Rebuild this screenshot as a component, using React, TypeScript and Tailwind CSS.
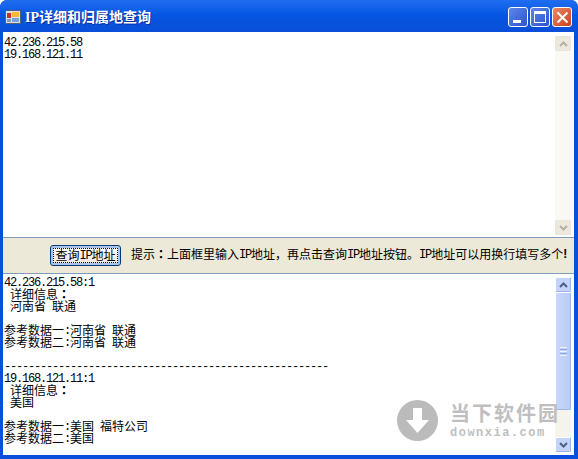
import React from "react";

function Txt({ text }: { text: string }) {
	const parts = text.match(/[\x00-\x7f]+|：|[^\x00-\x7f：]+/g) ?? [];
	return (
		<>
			{parts.map((p, i) => {
				if (p === "：") {
					return (
						<span key={i} className="inline-block align-top h-[12px] leading-[12px] font-bold font-['Noto_Sans_CJK_TC',sans-serif]">
							{p}
						</span>
					);
				}
				if (/^[\x00-\x7f]/.test(p)) {
					return (
						<span key={i} className="inline-block align-top h-[12px] leading-[14px] font-['Liberation_Mono',monospace] tracking-[-1.2px]">
							{p}
						</span>
					);
				}
				return (
					<span key={i} className="inline-block align-top h-[12px] leading-[12px]">
						{p}
					</span>
				);
			})}
		</>
	);
}

function Lines({ lines, top }: { lines: string[]; top: string }) {
	return (
		<div className={`flex-1 min-w-0 pl-[1px] overflow-hidden text-[12px] leading-[12px] text-black font-['Noto_Sans_CJK_SC',sans-serif] ${top}`}>
			{lines.map((l, i) => (
				<div key={i} className="h-[12px] whitespace-pre">
					<Txt text={l} />
				</div>
			))}
		</div>
	);
}

function Chevron({ up, color }: { up?: boolean; color: string }) {
	return (
		<svg width="9" height="6" viewBox="0 0 9 6" fill="none">
			<path d={up ? "M1 5L4.5 1.5L8 5" : "M1 1L4.5 4.5L8 1"} stroke={color} strokeWidth="2" />
		</svg>
	);
}

function DisabledBar() {
	return (
		<div className="w-[16px] mt-[4px] mb-[2px] mr-[3px] flex flex-col bg-[#f9f8f3]">
			<div className="h-[15px] rounded-[2px] border border-[#e8e6da] bg-[#ece9dc] flex items-center justify-center">
				<Chevron up color="#b5b2a2" />
			</div>
			<div className="flex-1" />
			<div className="h-[15px] rounded-[2px] border border-[#e8e6da] bg-[#ece9dc] flex items-center justify-center">
				<Chevron color="#b5b2a2" />
			</div>
		</div>
	);
}

function ActiveBar() {
	return (
		<div className="w-[16px] my-[3px] mr-[3px] flex flex-col bg-[#f5f4ec]">
			<div className="h-[15px] rounded-[2px] border border-white border-r-[#9fb4e4] border-b-[#9fb4e4] bg-[#c3d3fb] flex items-center justify-center">
				<Chevron up color="#4d6185" />
			</div>
			<div className="h-[118px] rounded-[2px] border border-white border-r-[#9fb4e4] border-b-[#9fb4e4] bg-gradient-to-r from-[#c9d6fb] to-[#b9ccf8] flex items-center justify-center">
				<div className="w-[7px] flex flex-col gap-[1px]">
					<div className="h-[1px] bg-[#eef3ff]" />
					<div className="h-[1px] bg-[#8fa8e6]" />
					<div className="h-[1px] bg-[#eef3ff]" />
					<div className="h-[1px] bg-[#8fa8e6]" />
					<div className="h-[1px] bg-[#eef3ff]" />
				</div>
			</div>
			<div className="flex-1" />
			<div className="h-[15px] rounded-[2px] border border-white border-r-[#9fb4e4] border-b-[#9fb4e4] bg-[#c3d3fb] flex items-center justify-center">
				<Chevron color="#4d6185" />
			</div>
		</div>
	);
}

export default function App() {
	return (
		<div className="relative w-[578px] h-[459px] overflow-hidden bg-white">
			<div className="w-full h-full flex flex-col rounded-t-[7px] bg-[#0a4fdc] overflow-hidden">
				{/* title bar */}
				<div className="h-[30px] shrink-0 flex items-center pt-[4px] pl-[5px] pr-[6px] bg-gradient-to-b from-[#1f6df0] via-[#0456e2] to-[#0a4fd8]">
					<svg width="16" height="16" viewBox="0 0 16 16" className="shrink-0">
						<rect x="0.5" y="1.5" width="15" height="13" fill="#d9dfe8" stroke="#52607a" />
						<rect x="2" y="4" width="4" height="5" fill="#c8322a" />
						<rect x="7" y="3" width="7" height="5" fill="#f2b83c" />
						<rect x="2" y="10" width="4" height="3" fill="#8a97ad" />
						<rect x="7" y="9" width="7" height="4" fill="#7f9fd8" />
					</svg>
					<div className="ml-[4px] text-[14px] leading-[16px] font-bold text-white whitespace-pre font-['Noto_Sans_CJK_SC',sans-serif] [text-shadow:1px_1px_0_#0a2f9c]">
						<span className="font-['Liberation_Serif',serif]">IP</span>详细和归属地查询
					</div>
					<div className="ml-auto flex gap-[2px]">
						<div className="w-[20px] h-[20px] rounded-[3px] border border-white bg-gradient-to-br from-[#5f86ea] to-[#2c53cf] flex items-end pl-[4px] pb-[3px]">
							<div className="w-[8px] h-[3px] bg-white" />
						</div>
						<div className="w-[20px] h-[20px] rounded-[3px] border border-white bg-gradient-to-br from-[#5f86ea] to-[#2c53cf] flex items-center justify-center">
							<div className="w-[12px] h-[12px] border border-white border-t-[3px]" />
						</div>
						<div className="w-[20px] h-[20px] rounded-[3px] border border-white bg-gradient-to-br from-[#e98a64] to-[#c93c18] flex items-center justify-center">
							<svg width="13" height="13" viewBox="0 0 13 13" fill="none">
								<path d="M1.5 1.5L11.5 11.5M11.5 1.5L1.5 11.5" stroke="white" strokeWidth="2" />
							</svg>
						</div>
					</div>
				</div>
				{/* client area */}
				<div className="flex-1 min-h-0 ml-[3px] mr-[4px] mb-[4px] mt-[2px] flex flex-col bg-[#ece9d8]">
					<div className="h-[206px] shrink-0 flex bg-white border-b border-[#7f9db9]">
						<Lines top="pt-[4px]" lines={["42.236.215.58", "19.168.121.11"]} />
						<DisabledBar />
					</div>
					<div className="h-[35px] shrink-0 flex items-center pl-[47px] font-['Noto_Sans_CJK_SC',sans-serif] text-[12px] leading-[12px] text-black">
						<button className="w-[71px] h-[21px] rounded-[3px] border border-[#003c74] bg-gradient-to-b from-white to-[#e9e6da] shadow-[inset_0_0_0_2px_#a8c4ec] flex items-center justify-center">
							<span className="w-[65px] h-[15px] pb-[2px] flex items-center justify-center outline-1 outline-dotted outline-black -outline-offset-1 whitespace-pre">
								<Txt text="查询IP地址" />
							</span>
						</button>
						<div className="ml-[10px] mb-[4px] whitespace-pre">
							<Txt text="提示：上面框里输入IP地址，再点击查询IP地址按钮。IP地址可以用换行填写多个" />
							<span className="inline-block align-top h-[12px] leading-[12px] w-[6px] font-bold font-['Liberation_Sans',sans-serif]">!</span>
						</div>
					</div>
					<div className="flex-1 min-h-0 flex bg-white border-t border-[#7f9db9]">
						<Lines
							top="pt-[2px]"
							lines={[
								"42.236.215.58:1",
								" 详细信息：",
								" 河南省 联通",
								"",
								"参考数据一:河南省 联通",
								"参考数据二:河南省 联通",
								"",
								"------------------------------------------------------",
								"19.168.121.11:1",
								" 详细信息：",
								" 美国",
								"",
								"参考数据一:美国 福特公司",
								"参考数据二:美国",
							]}
						/>
						<ActiveBar />
					</div>
				</div>
			</div>
			{/* downxia watermark */}
			<div className="absolute left-[397px] top-[400px] flex items-center gap-[12px] opacity-90">
				<svg width="41" height="41" viewBox="0 0 41 41">
					<circle cx="20.5" cy="20.5" r="20.5" fill="#b4b4b4" />
					<path d="M16 8H25V20H32L20.5 33L9 20H16Z" fill="white" />
				</svg>
				<div className="flex flex-col text-[#b9b9b9] w-[105px]">
					<div className="text-[20px] leading-[24px] font-bold font-['Noto_Sans_CJK_SC',sans-serif] tracking-[2px] whitespace-pre">
						当下软件园
					</div>
					<div className="mt-[1px] text-[12px] leading-[14px] font-bold font-['Liberation_Mono',monospace] tracking-[1.5px] whitespace-pre">
						downxia.com
					</div>
				</div>
			</div>
		</div>
	);
}
